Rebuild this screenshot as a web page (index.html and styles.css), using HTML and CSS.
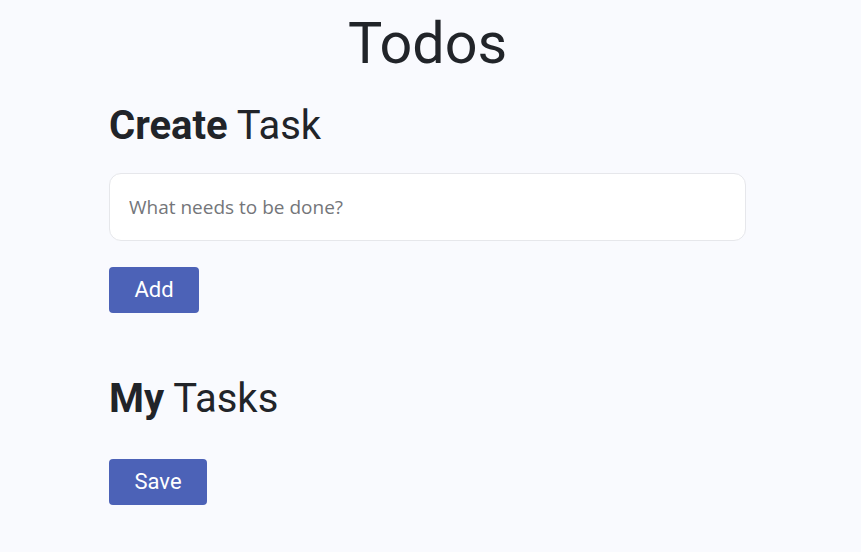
FILE: index.html
```html
<!DOCTYPE html>
<html lang="en">
<head>
<meta charset="utf-8">
<title>Todos</title>
<link rel="stylesheet" href="styles.css">
</head>
<body>
<main class="app">
  <h1 class="title">Todos</h1>
  <section class="create">
    <h2 class="heading"><strong>Create</strong> Task</h2>
    <input class="task-input" type="text" placeholder="What needs to be done?">
    <button class="btn btn-add" type="button">Add</button>
  </section>
  <section class="tasks">
    <h2 class="heading"><strong>My</strong> Tasks</h2>
    <button class="btn btn-save" type="button">Save</button>
  </section>
</main>
</body>
</html>
```

FILE: styles.css
```css
html, body {
  margin: 0;
  padding: 0;
  background: #f9fafe;
}
body {
  font-family: Roboto, "Liberation Sans", sans-serif;
  color: #212429;
}
.app {
  width: 637px;
  margin-left: 109px;
  display: flex;
  flex-direction: column;
  align-items: flex-start;
  padding-top: 8.5px;
}
.title {
  align-self: stretch;
  text-align: center;
  margin: 0;
  font-size: 57.5px;
  font-weight: 400;
  line-height: 1.2;
}
.create, .tasks {
  display: flex;
  flex-direction: column;
  align-items: flex-start;
  align-self: stretch;
}
.heading {
  margin: 0;
  font-size: 40px;
  font-weight: 400;
  line-height: 1.2;
}
.heading strong {
  font-weight: 700;
}
.create .heading {
  margin-top: 24px;
}
.task-input {
  box-sizing: border-box;
  align-self: stretch;
  margin-top: 23px;
  height: 68px;
  padding: 0 19px;
  border: 1px solid #e6e7eb;
  border-radius: 12px;
  background: #ffffff;
  font-family: "Open Sans", "Noto Sans", sans-serif;
  font-size: 19px;
  color: #212429;
  outline: none;
}
.task-input::placeholder {
  color: #74767a;
}
.btn {
  box-sizing: border-box;
  height: 46px;
  padding: 0 25.5px;
  border: none;
  border-radius: 4px;
  background: #4c62b7;
  color: #ffffff;
  font-family: Roboto, "Liberation Sans", sans-serif;
  font-size: 22px;
  font-weight: 400;
  cursor: pointer;
}
.btn-add {
  margin-top: 26px;
}
.tasks .heading {
  margin-top: 62.5px;
}
.btn-save {
  margin-top: 35.5px;
}
```
